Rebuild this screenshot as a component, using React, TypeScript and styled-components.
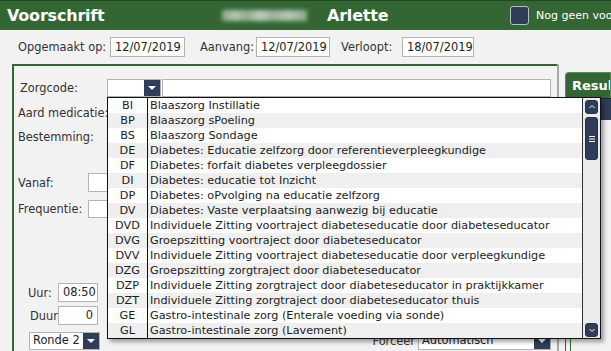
import React from 'react';
import styled, { createGlobalStyle } from 'styled-components';

const green = '#336633';
const navy = '#2e3d58';

const GlobalStyle = createGlobalStyle`
  html, body {
    margin: 0;
    padding: 0;
  }
  body {
    background: #f2f2f2;
    font-family: 'DejaVu Sans', Verdana, sans-serif;
    font-size: 11.4px;
    color: #333;
    overflow: hidden;
  }
`;

const Page = styled.div`
  width: 611px;
  height: 351px;
  overflow: hidden;
  display: flex;
  flex-direction: column;
`;

const Header = styled.div`
  flex-shrink: 0;
  height: 29px;
  border-top: 1px solid #1f4a1f;
  background: ${green};
  display: grid;
  grid-template-columns: 215px 105px 183px auto;
  align-items: center;
  padding-left: 7px;
  color: #fff;
  white-space: nowrap;
`;

const Title = styled.div`
  font-size: 16px;
  font-weight: bold;
  letter-spacing: -0.2px;
`;

const BlurredName = styled.div`
  width: 85px;
  height: 11px;
  background: linear-gradient(
    90deg,
    #8fa88c 0%,
    #b4c4b2 15%,
    #97ad94 30%,
    #c0cebe 45%,
    #9cb199 60%,
    #b7c6b5 78%,
    #93aa90 100%
  );
  filter: blur(2px);
`;

const CheckWrap = styled.div`
  display: flex;
  align-items: center;
  gap: 7px;
  overflow: hidden;
`;

const CheckBox = styled.div`
  width: 17px;
  height: 17px;
  flex-shrink: 0;
  border: 1px solid #b9bfc9;
  border-radius: 3px;
  background: ${navy};
`;

const CheckLabel = styled.span`
  font-size: 11px;
  color: #fff;
`;

const DateRow = styled.div`
  flex-shrink: 0;
  margin-top: 7px;
  height: 20px;
  padding-left: 18px;
  display: flex;
  align-items: center;
`;

const Label = styled.span<{ $w?: number; $pl?: number }>`
  flex-shrink: 0;
  width: ${(p) => (p.$w ? `${p.$w}px` : 'auto')};
  padding-left: ${(p) => p.$pl ?? 0}px;
  box-sizing: border-box;
  white-space: nowrap;
  color: #333;
`;

const Field = styled.div<{ $w: number; $h?: number; $align?: string }>`
  flex-shrink: 0;
  box-sizing: border-box;
  width: ${(p) => p.$w}px;
  height: ${(p) => p.$h ?? 20}px;
  line-height: ${(p) => (p.$h ?? 20) - 2}px;
  border: 1px solid #b3b3b3;
  background: #fff;
  padding: 0 4px;
  text-align: ${(p) => p.$align ?? 'left'};
  color: #222;
  white-space: nowrap;
  overflow: hidden;
`;

const Body = styled.div`
  flex: 1;
  margin-top: 7px;
  display: flex;
  min-height: 0;
`;

const FormPanel = styled.div`
  position: relative;
  width: 545px;
  margin-left: 12px;
  box-sizing: border-box;
  border-top: 2px solid ${green};
  border-left: 2px solid ${green};
  padding: 0 6px 0 4px;
  display: flex;
  flex-direction: column;
`;

const Row = styled.div<{ $mt: number; $h?: number }>`
  flex-shrink: 0;
  margin-top: ${(p) => p.$mt}px;
  height: ${(p) => p.$h ?? 18}px;
  display: flex;
  align-items: center;
`;

const Select = styled.div<{ $w: number; $h?: number; $ml?: number }>`
  flex-shrink: 0;
  box-sizing: border-box;
  width: ${(p) => p.$w}px;
  height: ${(p) => p.$h ?? 18}px;
  margin-left: ${(p) => p.$ml ?? 0}px;
  border: 1px solid #b3b3b3;
  background: #fff;
  display: flex;
  align-items: stretch;
`;

const SelectText = styled.span`
  flex: 1;
  padding-left: 3px;
  line-height: 15px;
  color: #222;
  white-space: nowrap;
  overflow: hidden;
`;

const SelectButton = styled.span`
  width: 16px;
  flex-shrink: 0;
  background: ${navy};
  display: flex;
  align-items: center;
  justify-content: center;
  &::after {
    content: '';
    border-left: 4px solid transparent;
    border-right: 4px solid transparent;
    border-top: 4px solid #fff;
  }
`;

const TextInput = styled.div`
  flex: 1;
  margin-left: 1px;
  height: 18px;
  box-sizing: border-box;
  border: 1px solid #b3b3b3;
  background: #fff;
`;

const Spacer = styled.div`
  flex: 1;
`;

const SideColumn = styled.div`
  flex: 1;
  border-left: 2px solid #a8a8a8;
  padding-left: 6px;
  display: flex;
  flex-direction: column;
  overflow: hidden;
`;

const Tab = styled.div`
  margin-top: 8px;
  height: 25px;
  line-height: 25px;
  background: ${green};
  border: 1px solid #5b8a57;
  border-bottom: none;
  border-radius: 4px 0 0 0;
  padding-left: 6px;
  color: #fff;
  font-size: 13px;
  font-weight: bold;
  white-space: nowrap;
  overflow: hidden;
`;

const NavyBar = styled.div`
  height: 21px;
  background: ${navy};
  border-top: 1px solid #1b2638;
`;

const BottomLines = styled.div`
  margin-top: auto;
  width: 4px;
  height: 16px;
  border-left: 1px solid ${green};
  border-right: 1px solid ${green};
`;

/* dropdown list that lies over the form */
const Dropdown = styled.div`
  position: absolute;
  left: 93px;
  top: 31px;
  z-index: 10;
  width: 494px;
  height: 242px;
  box-sizing: border-box;
  border: 1px solid #111;
  background: #fff;
  box-shadow: 3px 3px 4px rgba(0, 0, 0, 0.35);
  display: flex;
  font-size: 11.25px;
`;

const List = styled.div`
  flex: 1;
  display: flex;
  flex-direction: column;
`;

const Option = styled.div<{ $odd: boolean }>`
  height: 15px;
  line-height: 15px;
  display: flex;
  background: ${(p) => (p.$odd ? '#efefef' : '#fff')};
  color: #1c1c1c;
  white-space: nowrap;
`;

const Code = styled.span`
  width: 39px;
  flex-shrink: 0;
  border-right: 1px solid #111;
  text-align: center;
`;

const Desc = styled.span`
  padding-left: 2px;
  overflow: hidden;
`;

const Scrollbar = styled.div`
  width: 18px;
  flex-shrink: 0;
  box-sizing: border-box;
  border-left: 1px solid #333;
  background: #ebebeb;
  padding: 2px 2px 1px 2px;
  display: flex;
  flex-direction: column;
  gap: 3px;
`;

const ScrollPart = styled.div<{ $h: number }>`
  height: ${(p) => p.$h}px;
  border-radius: 3px;
  background: ${navy};
  border: 1px solid #25324a;
  box-sizing: border-box;
  display: flex;
  align-items: center;
  justify-content: center;
`;

const ScrollGap = styled.div`
  flex: 1;
`;

const options: [string, string][] = [
  ['BI', 'Blaaszorg Instillatie'],
  ['BP', 'Blaaszorg sPoeling'],
  ['BS', 'Blaaszorg Sondage'],
  ['DE', 'Diabetes: Educatie zelfzorg door referentieverpleegkundige'],
  ['DF', 'Diabetes: forfait diabetes verpleegdossier'],
  ['DI', 'Diabetes: educatie tot Inzicht'],
  ['DP', 'Diabetes: oPvolging na educatie zelfzorg'],
  ['DV', 'Diabetes: Vaste verplaatsing aanwezig bij educatie'],
  ['DVD', 'Individuele Zitting voortraject diabeteseducatie door diabeteseducator'],
  ['DVG', 'Groepszitting voortraject door diabeteseducator'],
  ['DVV', 'Individuele Zitting voortraject diabeteseducatie door verpleegkundige'],
  ['DZG', 'Groepszitting zorgtraject door diabeteseducator'],
  ['DZP', 'Individuele Zitting zorgtraject door diabeteseducator in praktijkkamer'],
  ['DZT', 'Individuele Zitting zorgtraject door diabeteseducator thuis'],
  ['GE', 'Gastro-intestinale zorg (Enterale voeding via sonde)'],
  ['GL', 'Gastro-intestinale zorg (Lavement)'],
];

const Chevron = ({ up }: { up?: boolean }) => (
  <svg width="8" height="6" viewBox="0 0 8 6">
    <polyline
      points={up ? '1.5,4 4,1.5 6.5,4' : '1.5,2 4,4.5 6.5,2'}
      fill="none"
      stroke="#fff"
      strokeWidth="1"
    />
  </svg>
);

const Grip = () => (
  <svg width="8" height="8" viewBox="0 0 8 8">
    <path d="M1 1.5h6M1 4h6M1 6.5h6" stroke="#fff" strokeWidth="1" />
  </svg>
);

const App = () => {
  return (
    <Page>
      <GlobalStyle />
      <Header>
        <Title>Voorschrift</Title>
        <BlurredName />
        <Title>Arlette</Title>
        <CheckWrap>
          <CheckBox />
          <CheckLabel>Nog geen voorschrift</CheckLabel>
        </CheckWrap>
      </Header>

      <DateRow>
        <Label $w={92}>Opgemaakt op:</Label>
        <Field $w={75}>12/07/2019</Field>
        <Label $w={71} $pl={15}>Aanvang:</Label>
        <Field $w={74}>12/07/2019</Field>
        <Label $w={72} $pl={11}>Verloopt:</Label>
        <Field $w={72}>18/07/2019</Field>
      </DateRow>

      <Body>
        <FormPanel>
          <Row $mt={13}>
            <Label $w={89} $pl={2}>Zorgcode:</Label>
            <Select $w={54}>
              <SelectText />
              <SelectButton />
            </Select>
            <TextInput />
          </Row>
          <Row $mt={7}>
            <Label $w={89}>Aard medicatie:</Label>
            <Select $w={160}>
              <SelectText />
              <SelectButton />
            </Select>
          </Row>
          <Row $mt={6}>
            <Label $w={89}>Bestemming:</Label>
            <Select $w={160}>
              <SelectText />
              <SelectButton />
            </Select>
          </Row>
          <Row $mt={27} $h={19}>
            <Label $w={70}>Vanaf:</Label>
            <Field $w={102} $h={19} $align="center">
              12/07/2019
            </Field>
          </Row>
          <Row $mt={8}>
            <Label $w={70}>Frequentie:</Label>
            <Field $w={60} $h={18} />
          </Row>
          <Row $mt={65} $h={19}>
            <Label $w={40} $pl={10}>Uur:</Label>
            <Field $w={40} $h={19} $align="right">
              08:50
            </Field>
          </Row>
          <Row $mt={4} $h={19}>
            <Label $w={40} $pl={12}>Duur:</Label>
            <Field $w={40} $h={19} $align="right">
              0
            </Field>
          </Row>
          <Row $mt={7}>
            <Select $w={71} $ml={11}>
              <SelectText>Ronde 2</SelectText>
              <SelectButton />
            </Select>
            <Spacer />
            <Label>Forceer</Label>
            <Select $w={133} $ml={3}>
              <SelectText>Automatisch</SelectText>
              <SelectButton />
            </Select>
          </Row>

          <Dropdown>
            <List>
              {options.map(([code, desc], i) => (
                <Option key={code} $odd={i % 2 === 1}>
                  <Code>{code}</Code>
                  <Desc>{desc}</Desc>
                </Option>
              ))}
            </List>
            <Scrollbar>
              <ScrollPart $h={14}>
                <Chevron up />
              </ScrollPart>
              <ScrollPart $h={43}>
                <Grip />
              </ScrollPart>
              <ScrollGap />
              <ScrollPart $h={14}>
                <Chevron />
              </ScrollPart>
            </Scrollbar>
          </Dropdown>
        </FormPanel>

        <SideColumn>
          <Tab>Resultaten</Tab>
          <NavyBar />
          <BottomLines />
        </SideColumn>
      </Body>
    </Page>
  );
};

export default App;
